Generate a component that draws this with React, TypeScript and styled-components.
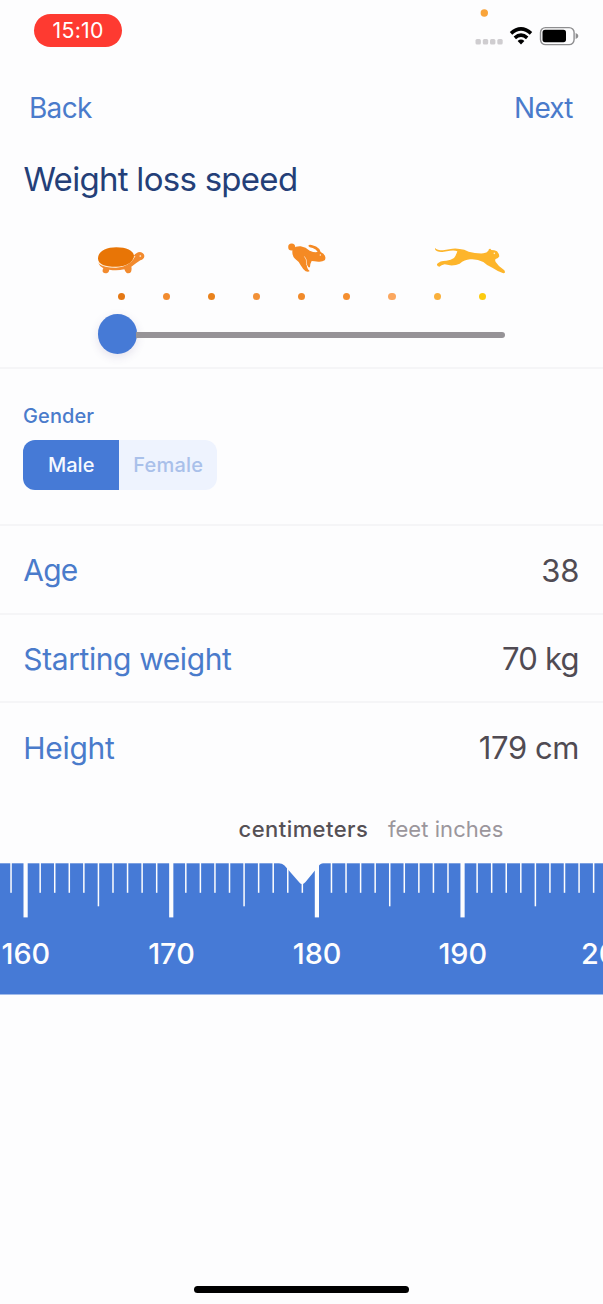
import React from "react";
import styled, { createGlobalStyle } from "styled-components";

const blue = "#467ad6";
const linkBlue = "#4a7bcb";

const GlobalStyle = createGlobalStyle`
  * { box-sizing: border-box; }
  body { margin: 0; background: #fdfdfe; font-family: Inter, "Liberation Sans", sans-serif; overflow: hidden; }
`;

const Screen = styled.main`
  width: 603px;
  height: 1304px;
  display: flex;
  flex-direction: column;
  overflow: hidden;
  background: #fdfdfe;
`;

const Label = styled.span<{ $size: number; $color: string; $weight?: number; $spacing?: number }>`
  font-size: ${(p) => p.$size}px;
  line-height: 1;
  color: ${(p) => p.$color};
  font-weight: ${(p) => p.$weight ?? 400};
  letter-spacing: ${(p) => p.$spacing ?? 0}px;
  margin-right: ${(p) => -(p.$spacing ?? 0)}px;
  white-space: nowrap;
`;

const StatusBar = styled.header`
  height: 76px;
  flex: none;
  display: flex;
  justify-content: space-between;
  align-items: flex-start;
  padding: 14px 24px 0 34px;
`;

const TimePill = styled.div`
  width: 88px;
  height: 33px;
  border-radius: 17px;
  background: #fe3a31;
  display: flex;
  align-items: center;
  justify-content: center;
`;

const StatusIcons = styled.svg`
  width: 106px;
  height: 42px;
  margin-top: -8px;
`;

const NavBar = styled.nav`
  height: 64px;
  flex: none;
  display: flex;
  justify-content: space-between;
  align-items: center;
  padding: 0 29.5px 0 29px;
`;

const Title = styled.h1`
  margin: 0;
  height: 103px;
  flex: none;
  padding: 23px 24px 0 23.5px;
  line-height: 1;
  font-size: 33px;
`;

const SpeedSection = styled.section`
  height: 126px;
  flex: none;
  border-bottom: 2px solid #f5f5f7;
`;

const Animals = styled.div`
  display: grid;
  grid-template-columns: 48px 40px 74px;
  column-gap: 142px;
  align-items: end;
  height: 31px;
  margin-left: 97px;
  svg { display: block; }
  svg:last-child { margin-left: -36px; }
`;

const Dots = styled.div`
  display: flex;
  justify-content: space-between;
  width: 368.4px;
  margin: 19px 0 0 117.6px;
`;

const Dot = styled.i<{ $color: string }>`
  width: 7.2px;
  height: 7.2px;
  border-radius: 50%;
  background: ${(p) => p.$color};
`;

const Slider = styled.div`
  display: flex;
  align-items: center;
  width: 407px;
  height: 40px;
  margin: 13.6px 0 0 97.7px;
`;

const Thumb = styled.div`
  width: 39.5px;
  height: 39.5px;
  border-radius: 50%;
  background: ${blue};
  box-shadow: 0 3px 10px rgba(80, 60, 130, 0.14);
  flex: none;
`;

const Track = styled.div`
  flex: 1;
  height: 6px;
  margin: 3px 0 0 -1px;
  border-radius: 0 3px 3px 0;
  background: #969397;
`;

const GenderSection = styled.section`
  height: 157px;
  flex: none;
  padding: 37px 23px 0;
  display: flex;
  flex-direction: column;
  border-bottom: 2px solid #f5f5f7;
`;

const Segmented = styled.div`
  display: flex;
  width: 194px;
  height: 49.5px;
  margin-top: 14px;
  border-radius: 12px;
  overflow: hidden;
`;

const Segment = styled.div<{ $active?: boolean }>`
  flex: ${(p) => (p.$active ? "0 0 96.4px" : "1")};
  display: flex;
  align-items: center;
  justify-content: center;
  background: ${(p) => (p.$active ? blue : "#eef3fe")};
`;

const Row = styled.section<{ $last?: boolean }>`
  height: ${(p) => (p.$last ? 89 : 88.5)}px;
  flex: none;
  display: flex;
  justify-content: space-between;
  align-items: center;
  padding: ${(p) => (p.$last ? 0 : 2)}px 23.5px 0 23.3px;
  border-bottom: ${(p) => (p.$last ? "none" : "2px solid #f5f5f7")};
`;

const Units = styled.div`
  height: 71px;
  flex: none;
  display: flex;
  gap: 20px;
  padding: 26px 0 0 238.5px;
`;

const Ruler = styled.svg`
  display: block;
  width: 603px;
  height: 132px;
  flex: none;
`;

const HomeIndicator = styled.div`
  width: 215px;
  height: 7px;
  border-radius: 4px;
  background: #000;
  margin: auto auto 11px 194px;
`;

const Turtle = () => (
  <svg width="48" height="28" viewBox="51 48 144 84">
    <path fill="#f28a2e" d="M55 98 Q68 111 105 111 Q142 109 158 84 Q165 67 180 66 Q193 69 193 79 Q192 88 181 91 Q169 99 154 110 Q156 118 153 126 Q149 131 140 129 Q135 124 133 118 Q110 123 88 119 Q87 126 82 129 Q73 131 69 127 Q66 122 70 115 Q59 110 55 98Z" />
    <path fill="none" stroke="#fff0dc" strokeWidth="3" d="M55 98 Q68 112 108 112 Q151 109 165 78" />
    <path fill="#e87506" d="M54 86 C53 65 78 52 109 52 C139 52 160 62 162 77 C160 99 135 110 108 110 C75 110 55 103 54 86Z" />
    <circle cx="181" cy="78" r="2.6" fill="#fff0dc" />
  </svg>
);

const Rabbit = () => (
  <svg width="40" height="31" viewBox="51 39 120 93">
    <path fill="#f58a24" d="M68 56 Q78 48 92 49 Q108 52 119 62 Q130 67 138 67 L143 65 Q138 57 128 54 Q117 53 115 48 Q116 43 125 45 Q140 48 148 57 L152 66 Q163 70 165 79 Q168 85 164 91 Q157 96 145 95 Q132 93 125 93 Q121 99 120 111 Q116 115 113 108 L110 102 Q110 116 119 123 Q116 127 107 124 Q98 117 92 106 Q86 93 75 86 Q64 76 68 56Z" />
    <circle cx="65" cy="51" r="10.5" fill="#f58a24" />
    <path fill="none" stroke="#fff2e2" strokeWidth="2" strokeLinecap="round" d="M104 80 Q112 88 110 104" />
    <circle cx="151" cy="75" r="2.2" fill="#fff2e2" />
  </svg>
);

const Cheetah = () => (
  <svg width="74" height="28" viewBox="24 48 222 84">
    <path fill="#fdb52b" d="M30 54 Q36 61 54 61 L82 56 Q93 54 104 57 Q118 58 131 65 Q152 71 175 70 Q186 68 190 62 Q191 55 196 56 L199 60 Q208 60 216 64 Q222 71 223 79 Q219 87 212 87 Q209 90 212 96 Q220 109 238 121 Q243 130 235 130 Q220 125 202 113 Q186 107 175 96 Q156 86 135 88 Q119 89 104 101 Q92 107 75 106 L59 103 Q49 105 43 110 Q35 109 36 102 Q44 92 64 92 Q78 91 87 84 Q95 73 97 64 Q90 60 75 62 L52 66 Q35 67 30 58Z" />
    <circle cx="208" cy="70" r="2.4" fill="#fff3d6" />
  </svg>
);

const dotColors = ["#e47814", "#f28c30", "#e9821c", "#f29138", "#f18a2a", "#f58f30", "#fba75f", "#f9b03c", "#fccb10"];

const tickStep = 14.565;
const ticks = Array.from({ length: 42 }, (_, i) => ({ value: 159 + i, x: 25.6 + (i - 1) * tickStep }));

const HeightRuler = () => (
  <Ruler viewBox="0 0 603 132">
    <rect y="0.3" width="603" height="131.2" fill={blue} />
    {ticks.map(({ value, x }) => {
      const major = value % 10 === 0;
      const w = major ? 4.2 : 1.5;
      const h = major ? 54.4 : value % 5 === 0 ? 43.3 : 29.8;
      return <rect key={value} x={x - w / 2} y="0" width={w} height={h} fill="#fdfdfe" />;
    })}
    <path d="M279 0 Q282 0 284.5 2.5 L298.5 18.5 Q302 23.5 305.5 19 L317 5 Q320 0.3 323 0Z" fill="#fdfdfe" />
    <g fill="#fdfdfe" fontFamily="Inter, sans-serif" fontSize="28.8" fontWeight="480" textAnchor="middle">
      {ticks
        .filter((t) => t.value % 10 === 0)
        .map((t) => (
          <text key={t.value} x={t.x + 0.2} y="101.2">
            {t.value}
          </text>
        ))}
    </g>
  </Ruler>
);

export default function App() {
  return (
    <Screen>
      <GlobalStyle />
      <StatusBar>
        <TimePill>
          <Label $size={21.3} $color="#fff" $weight={420} $spacing={0.3}>15:10</Label>
        </TimePill>
        <StatusIcons viewBox="473 6 106 42">
          <circle cx="484.3" cy="13" r="3.7" fill="#f9a43a" />
          {[475.5, 482.8, 490, 497.3].map((x) => (
            <rect key={x} x={x} y="39" width="5.4" height="5.6" rx="1.5" fill="#cfcdd0" />
          ))}
          <g fill="none" stroke="#000" strokeWidth="3.6">
            <path d="M511 33.3 Q521 24.4 531 33.3" />
            <path d="M514.8 37.8 Q521 32.4 527.2 37.8" />
          </g>
          <path d="M517.6 41 Q521 38.2 524.4 41 L521 44.4Z" />
          <rect x="540.5" y="27.6" width="33.6" height="17" rx="5" fill="none" stroke="#8e8e90" strokeWidth="1.4" />
          <rect x="542.5" y="29.8" width="23.5" height="12.4" rx="2.6" />
          <path d="M575.6 33 Q578.4 34 578.4 36 Q578.4 38 575.6 39Z" fill="#8e8e90" />
        </StatusIcons>
      </StatusBar>
      <NavBar>
        <Label $size={28} $color={linkBlue} $spacing={-0.7}>Back</Label>
        <Label $size={28} $color={linkBlue} $spacing={-0.8}>Next</Label>
      </NavBar>
      <Title>
        <Label $size={33} $color="#243f78" $spacing={-0.72}>Weight loss speed</Label>
      </Title>
      <SpeedSection>
        <Animals>
          <Turtle />
          <Rabbit />
          <Cheetah />
        </Animals>
        <Dots>
          {dotColors.map((c, i) => (
            <Dot key={i} $color={c} />
          ))}
        </Dots>
        <Slider>
          <Thumb />
          <Track />
        </Slider>
      </SpeedSection>
      <GenderSection>
        <Label $size={20} $color={linkBlue} $weight={500} $spacing={0.1}>Gender</Label>
        <Segmented>
          <Segment $active>
            <Label $size={20} $color="#f6f9ff" $weight={550}>Male</Label>
          </Segment>
          <Segment>
            <Label $size={20} $color="#a9c0ea" $weight={500} $spacing={0.2}>Female</Label>
          </Segment>
        </Segmented>
      </GenderSection>
      <Row>
        <Label $size={30} $color={linkBlue} $spacing={-0.8}>Age</Label>
        <Label $size={31} $color="#504b53">38</Label>
      </Row>
      <Row>
        <Label $size={30} $color={linkBlue} $spacing={-0.4}>Starting weight</Label>
        <Label $size={31} $color="#504b53" $spacing={-0.8}>70 kg</Label>
      </Row>
      <Row $last>
        <Label $size={30} $color={linkBlue} $spacing={-0.3}>Height</Label>
        <Label $size={31} $color="#504b53" $spacing={-0.4}>179 cm</Label>
      </Row>
      <Units>
        <Label $size={22} $color="#555055" $weight={500} $spacing={0.45}>centimeters</Label>
        <Label $size={22} $color="#9b969c" $spacing={0.05}>feet inches</Label>
      </Units>
      <HeightRuler />
      <HomeIndicator />
    </Screen>
  );
}
